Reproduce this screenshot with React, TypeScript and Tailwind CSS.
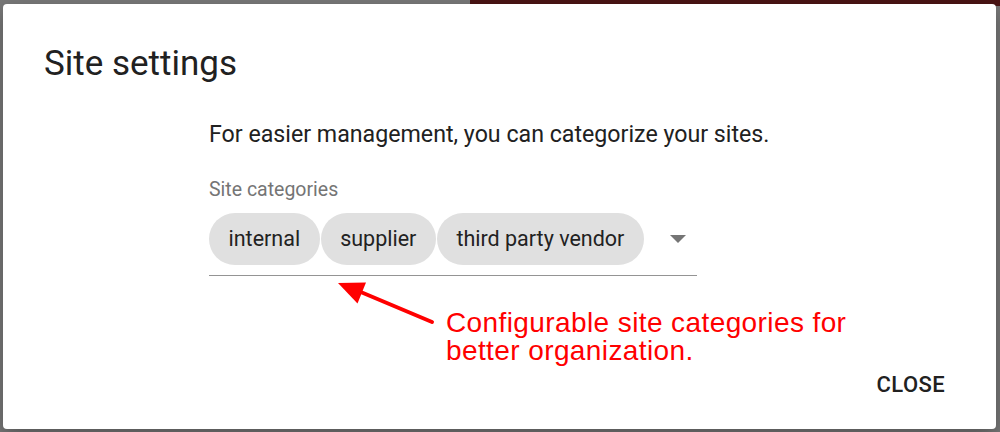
import React from 'react'

const categories = ['internal', 'supplier', 'third party vendor']

function CategoryChip({ label }: { label: string }) {
  return (
    <div className="flex h-[52px] items-center rounded-full bg-[#e0e0e0] px-[19.5px] text-[21.5px] leading-[28px] text-[#222222]">
      {label}
    </div>
  )
}

function Callout() {
  return (
    <>
      <svg className="pointer-events-none absolute left-0 top-0" width="1000" height="432" viewBox="0 0 1000 432">
        <line x1="432" y1="322" x2="356" y2="290" stroke="#ff0000" strokeWidth="4" strokeLinecap="round" />
        <polygon points="338,283 366,282.5 357.5,303.5" fill="#ff0000" />
      </svg>
      <div className="pointer-events-none absolute left-[446px] top-[309px] font-['Liberation_Sans',Arial,sans-serif] text-[28px] leading-[28px] tracking-[0.4px] text-[#ff0000]">
        <div>Configurable site categories for</div>
        <div>better organization.</div>
      </div>
    </>
  )
}

export default function App() {
  return (
    <div className="relative h-[432px] w-[1000px] overflow-hidden bg-[#787878] font-['Roboto',sans-serif]">
      <div className="absolute right-0 top-0 h-[6px] w-[530px] bg-[#4a1414]" />
      <div className="relative ml-[3px] mt-[4px] flex h-[425px] w-[993px] flex-col rounded-[4px] bg-white shadow-[0_8px_20px_rgba(0,0,0,0.3)]">
        <h2 className="pl-[41px] pt-[40px] text-[35px] font-normal leading-[40px] text-[#212121]">Site settings</h2>

        <div className="pl-[206px]">
          <p className="mt-[36px] text-[23.2px] leading-[28px] text-[#212121]">
            For easier management, you can categorize your sites.
          </p>
          <div className="mt-[30px] text-[19.5px] leading-[24px] text-[#757575]">Site categories</div>
          <div className="mt-[11px] flex w-[488px] items-center border-b border-[#949494] pb-[10px]">
            <div className="flex gap-[1px]">
              {categories.map((c) => (
                <CategoryChip key={c} label={c} />
              ))}
            </div>
            <svg className="ml-[26px]" width="16" height="8" viewBox="0 0 16 8">
              <path d="M0 0 L16 0 L8 8 Z" fill="#757575" />
            </svg>
          </div>
        </div>

        <div className="mt-auto flex justify-end pb-[30px] pr-[51px]">
          <button className="text-[22px] font-medium uppercase leading-[28px] tracking-[0.4px] text-[#212121]">
            Close
          </button>
        </div>
      </div>
      <Callout />
    </div>
  )
}
